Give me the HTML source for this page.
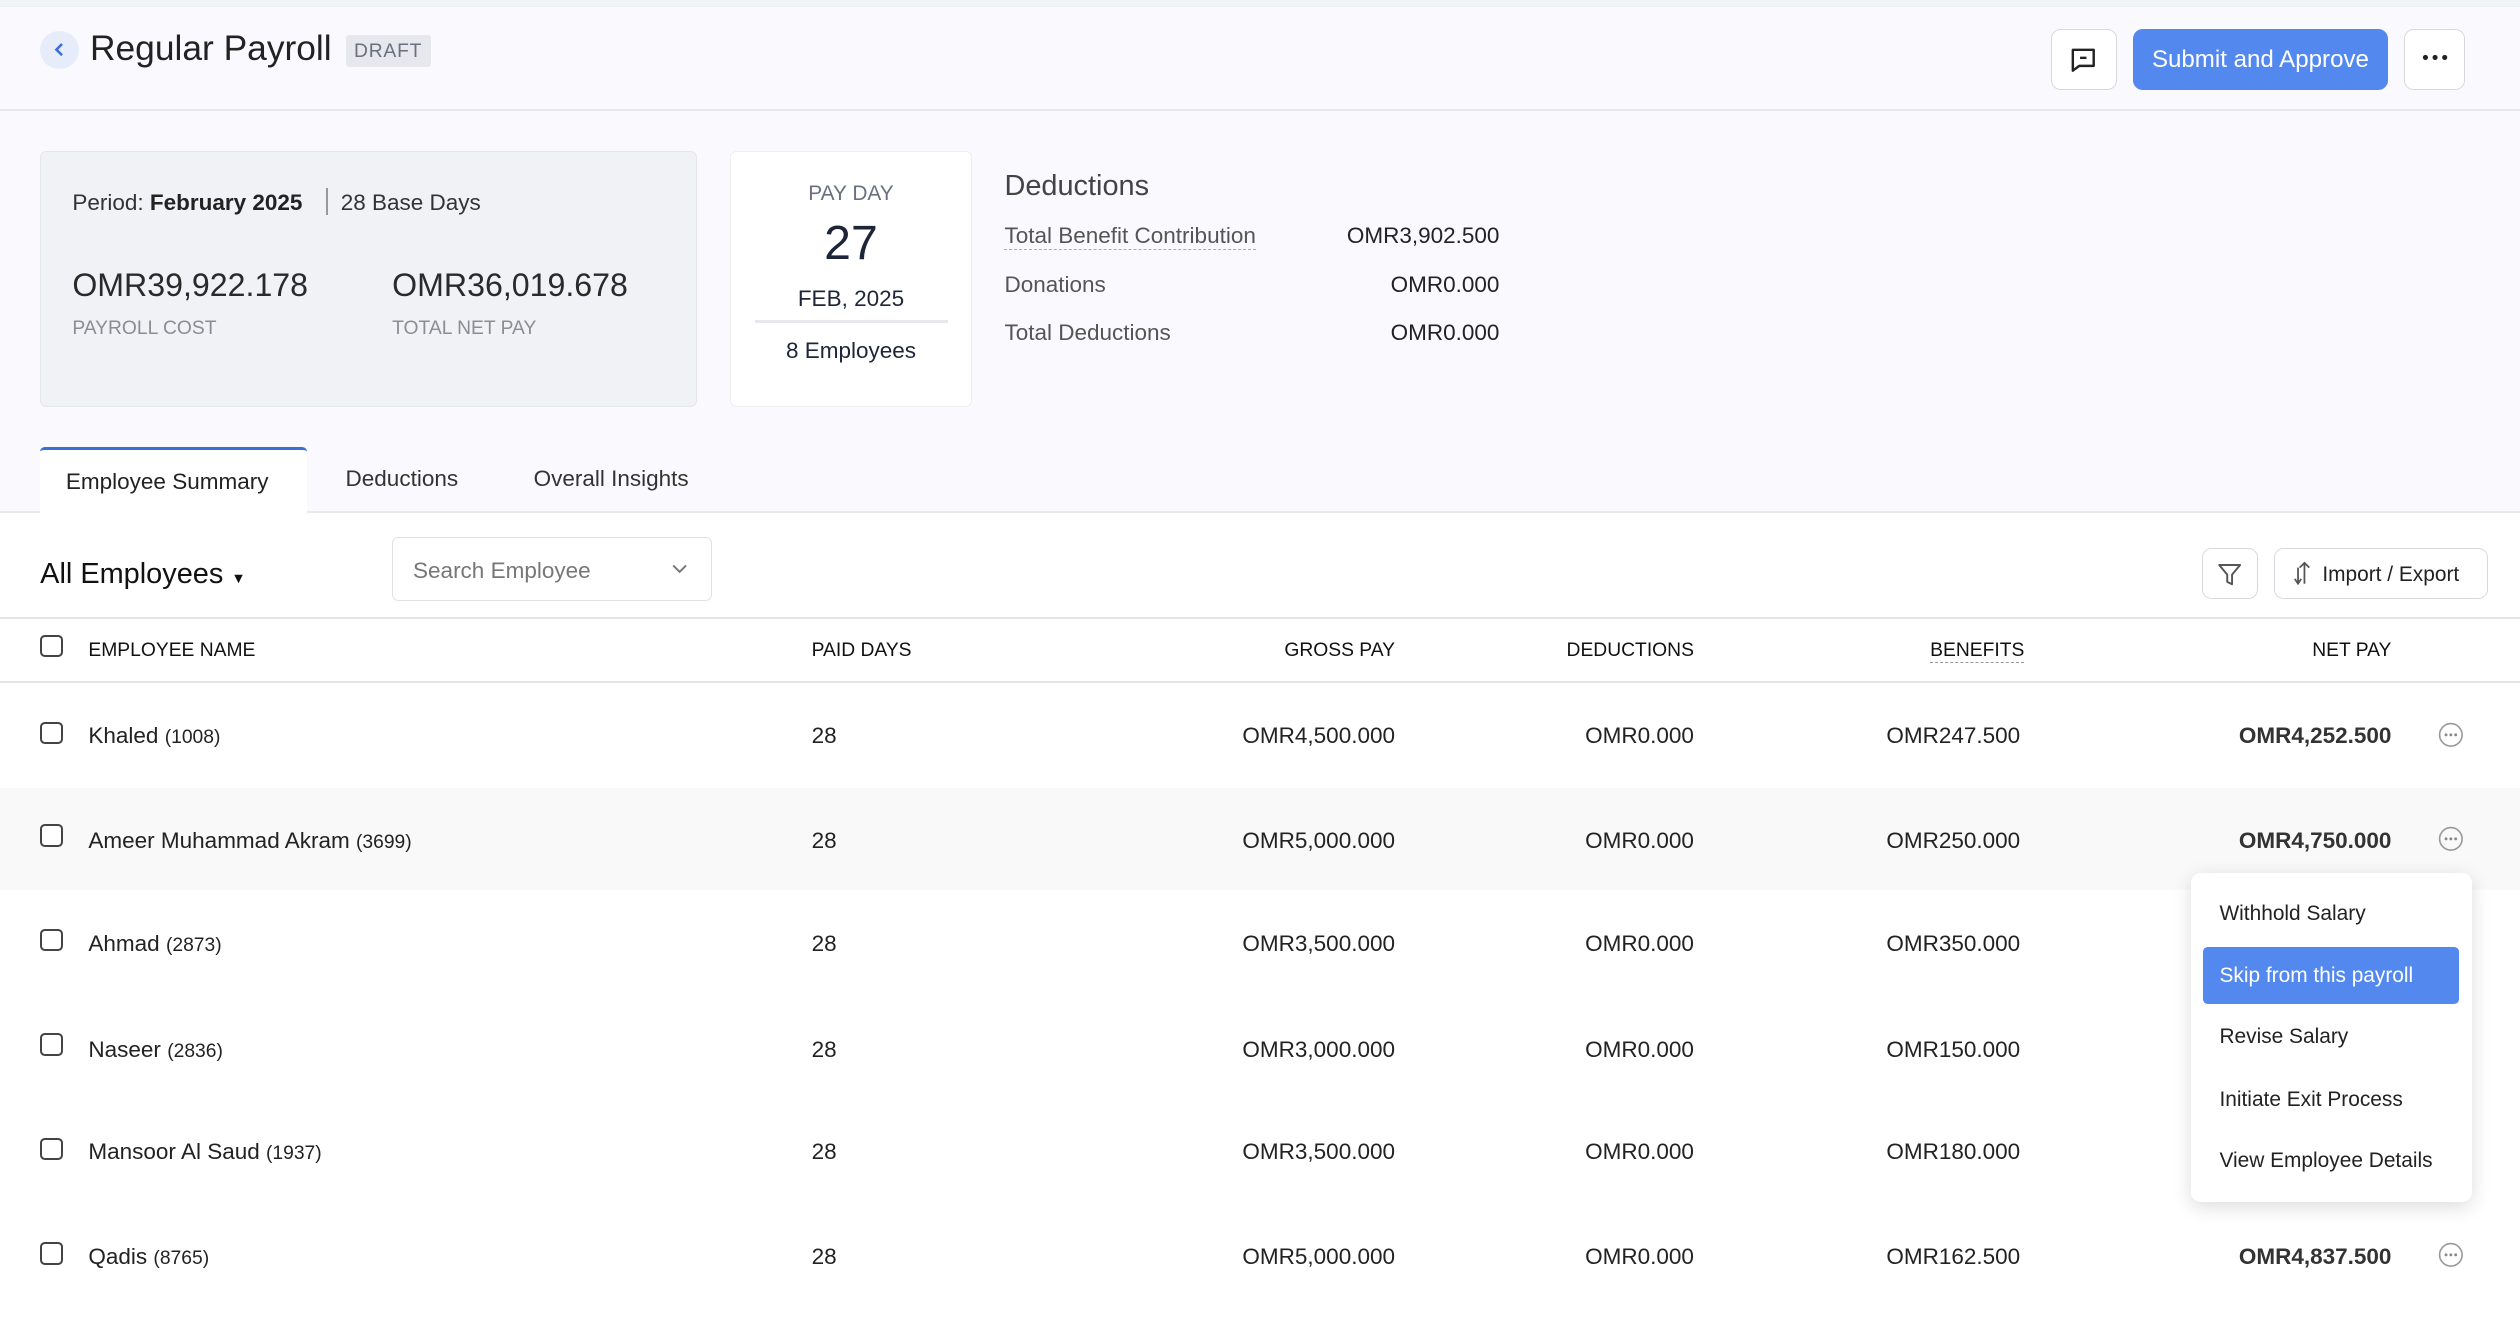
<!DOCTYPE html>
<html><head><meta charset="utf-8"><style>
*{box-sizing:border-box;margin:0;padding:0}
html,body{width:2520px;height:1326px;overflow:hidden;background:#fff}
#w{width:1568px;height:825px;zoom:1.607143;position:relative;font-family:"Liberation Sans",sans-serif;color:#222;background:#fff}
.a{position:absolute;white-space:nowrap}
.r{text-align:right}
.btn{position:absolute;border:1px solid #d6d8de;border-radius:6px;background:#fff}
.cb{position:absolute;left:25px;width:14px;height:14px;border:1.3px solid #444;border-radius:3px;background:#fff}
.row{font-size:14px;margin-top:1px}
</style></head><body><div id="w">
<div class="a" style="left:0;top:0;width:1568px;height:4px;background:#f2f3f7"></div>
<div class="a" style="left:0;top:4px;width:1568px;height:315px;background:#fafafe;border-top:1px solid #eceef2"></div>
<div class="a" style="left:0;top:68px;width:1568px;height:1px;background:#e6e8ec"></div>
<div class="a" style="left:25px;top:19px;width:24px;height:24px;border-radius:50%;background:#e6ecfa"></div>
<svg class="a" style="left:31px;top:25px" width="12" height="12" viewBox="0 0 12 12"><path d="M7.5 2.5 4 6l3.5 3.5" stroke="#3b6fd8" stroke-width="1.6" fill="none"/></svg>
<div class="a" style="left:56px;top:18px;font-size:22px;color:#222">Regular Payroll</div>
<div class="a" style="left:215px;top:22px;width:53px;height:20px;background:#e6e8ee;border-radius:2px;font-size:12px;color:#6b7080;text-align:center;line-height:21px;letter-spacing:.5px">DRAFT</div>
<div class="btn" style="left:1276px;top:18px;width:41px;height:38px"></div>
<svg class="a" style="left:1287px;top:28px" width="19" height="19" viewBox="0 0 19 19"><path d="M3 3h13v10H7l-4 3z" stroke="#222" stroke-width="1.5" fill="none" stroke-linejoin="round"/><path d="M7.5 8h4" stroke="#222" stroke-width="1.5"/></svg>
<div class="a" style="left:1327px;top:18px;width:159px;height:38px;background:#5389ef;border-radius:6px;color:#fff;font-size:15px;text-align:center;line-height:38px">Submit and Approve</div>
<div class="btn" style="left:1496px;top:18px;width:38px;height:38px"></div>
<svg class="a" style="left:1505px;top:32px" width="20" height="8" viewBox="0 0 20 8"><circle cx="4" cy="4" r="1.6" fill="#222"/><circle cx="10" cy="4" r="1.6" fill="#222"/><circle cx="16" cy="4" r="1.6" fill="#222"/></svg>

<div class="a" style="left:25px;top:94px;width:409px;height:159px;background:#f1f2f6;border:1px solid #e4e6eb;border-radius:4px"></div>
<div class="a" style="left:45px;top:118px;font-size:14px;color:#333">Period: <span style="color:#222;font-weight:bold">February 2025</span></div>
<div class="a" style="left:203px;top:117px;width:1px;height:17px;background:#999"></div>
<div class="a" style="left:212px;top:118px;font-size:14px;color:#333">28 Base Days</div>
<div class="a" style="left:45px;top:166px;font-size:20px;color:#2a2a2a">OMR39,922.178</div>
<div class="a" style="left:244px;top:166px;font-size:20px;color:#2a2a2a">OMR36,019.678</div>
<div class="a" style="left:45px;top:198px;font-size:12px;color:#8a8d96">PAYROLL COST</div>
<div class="a" style="left:244px;top:198px;font-size:12px;color:#8a8d96">TOTAL NET PAY</div>

<div class="a" style="left:454px;top:94px;width:151px;height:159px;background:#fff;border:1px solid #eceef2;border-radius:4px"></div>
<div class="a" style="left:454px;top:113px;width:151px;text-align:center;font-size:13px;color:#6b7080">PAY DAY</div>
<div class="a" style="left:454px;top:134px;width:151px;text-align:center;font-size:30px;color:#1f2538">27</div>
<div class="a" style="left:454px;top:178px;width:151px;text-align:center;font-size:14px;color:#1f2538">FEB, 2025</div>
<div class="a" style="left:470px;top:199px;width:120px;height:2px;background:#e6e8ec"></div>
<div class="a" style="left:454px;top:210px;width:151px;text-align:center;font-size:14px;color:#1f2538">8 Employees</div>

<div class="a" style="left:625px;top:106px;font-size:18px;color:#444">Deductions</div>
<div class="a" style="left:625px;top:139px;font-size:14px;color:#555;border-bottom:1px dashed #aaa">Total Benefit Contribution</div>
<div class="a" style="left:625px;top:169px;font-size:14px;color:#555">Donations</div>
<div class="a" style="left:625px;top:199px;font-size:14px;color:#555">Total Deductions</div>
<div class="a r" style="left:780px;width:153px;top:139px;font-size:14px;color:#222">OMR3,902.500</div>
<div class="a r" style="left:780px;width:153px;top:169px;font-size:14px;color:#222">OMR0.000</div>
<div class="a r" style="left:780px;width:153px;top:199px;font-size:14px;color:#222">OMR0.000</div>

<div class="a" style="left:0;top:318px;width:1568px;height:1px;background:#e6e8ec"></div>
<div class="a" style="left:25px;top:278px;width:166px;height:42px;background:#fff;border-top:2px solid #3b6fd8;border-radius:3px 3px 0 0"></div>
<div class="a" style="left:41px;top:292px;font-size:14px;color:#222">Employee Summary</div>
<div class="a" style="left:215px;top:290px;font-size:14px;color:#333">Deductions</div>
<div class="a" style="left:332px;top:290px;font-size:14px;color:#333">Overall Insights</div>

<div class="a" style="left:25px;top:347px;font-size:18px;color:#111">All Employees <span style="font-size:9px">▼</span></div>
<div class="a" style="left:244px;top:334px;width:199px;height:40px;border:1px solid #dfe1e6;border-radius:4px"></div>
<div class="a" style="left:257px;top:347px;font-size:14px;color:#777">Search Employee</div>
<svg class="a" style="left:417px;top:348px" width="12" height="12" viewBox="0 0 12 12"><path d="M2 4l4 4 4-4" stroke="#777" stroke-width="1.2" fill="none"/></svg>
<div class="btn" style="left:1370px;top:341px;width:35px;height:32px"></div>
<svg class="a" style="left:1379px;top:349px" width="17" height="17" viewBox="0 0 17 17"><path d="M2 2.5h13l-5 6v6l-3-1.5v-4.5z" stroke="#555" stroke-width="1.2" fill="none" stroke-linejoin="round"/></svg>
<div class="btn" style="left:1415px;top:341px;width:133px;height:32px"></div>
<svg class="a" style="left:1425px;top:347px" width="16" height="18" viewBox="0 0 16 18"><path d="M9 16V3M6 6l3-3 3 3M5 6v10M3 13l2 3 2-3" stroke="#555" stroke-width="1.1" fill="none"/></svg>
<div class="a" style="left:1445px;top:350px;font-size:13px;color:#222">Import / Export</div>

<div class="a" style="left:0;top:384px;width:1568px;height:1px;background:#e2e4e8"></div>
<div class="a" style="left:0;top:424px;width:1568px;height:1px;background:#e2e4e8"></div>
<div class="cb" style="top:395px"></div>
<div class="a" style="left:55px;top:398px;font-size:12px;color:#111">EMPLOYEE NAME</div>
<div class="a" style="left:505px;top:398px;font-size:12px;color:#111">PAID DAYS</div>
<div class="a r" style="left:700px;width:168px;top:398px;font-size:12px;color:#111">GROSS PAY</div>
<div class="a r" style="left:900px;width:154px;top:398px;font-size:12px;color:#111">DEDUCTIONS</div>
<div class="a" style="left:1201px;top:398px;font-size:12px;color:#111;border-bottom:1px dashed #999">BENEFITS</div>
<div class="a r" style="left:1300px;width:188px;top:398px;font-size:12px;color:#111">NET PAY</div>

<div class="a" style="left:0;top:490px;width:1568px;height:64px;background:#f9f9fa"></div>

<div class="cb" style="top:449px"></div><div class="a row" style="left:55px;top:449px">Khaled <span style="font-size:12px">(1008)</span></div><div class="a row" style="left:505px;top:449px">28</div><div class="a row r" style="left:700px;width:168px;top:449px">OMR4,500.000</div><div class="a row r" style="left:900px;width:154px;top:449px">OMR0.000</div><div class="a row r" style="left:1100px;width:157px;top:449px">OMR247.500</div><div class="a row r" style="left:1300px;width:188px;top:449px;font-weight:bold;color:#333">OMR4,252.500</div>
<div class="cb" style="top:513px"></div><div class="a row" style="left:55px;top:514px">Ameer Muhammad Akram <span style="font-size:12px">(3699)</span></div><div class="a row" style="left:505px;top:514px">28</div><div class="a row r" style="left:700px;width:168px;top:514px">OMR5,000.000</div><div class="a row r" style="left:900px;width:154px;top:514px">OMR0.000</div><div class="a row r" style="left:1100px;width:157px;top:514px">OMR250.000</div><div class="a row r" style="left:1300px;width:188px;top:514px;font-weight:bold;color:#333">OMR4,750.000</div>
<div class="cb" style="top:578px"></div><div class="a row" style="left:55px;top:578px">Ahmad <span style="font-size:12px">(2873)</span></div><div class="a row" style="left:505px;top:578px">28</div><div class="a row r" style="left:700px;width:168px;top:578px">OMR3,500.000</div><div class="a row r" style="left:900px;width:154px;top:578px">OMR0.000</div><div class="a row r" style="left:1100px;width:157px;top:578px">OMR350.000</div>
<div class="cb" style="top:643px"></div><div class="a row" style="left:55px;top:644px">Naseer <span style="font-size:12px">(2836)</span></div><div class="a row" style="left:505px;top:644px">28</div><div class="a row r" style="left:700px;width:168px;top:644px">OMR3,000.000</div><div class="a row r" style="left:900px;width:154px;top:644px">OMR0.000</div><div class="a row r" style="left:1100px;width:157px;top:644px">OMR150.000</div>
<div class="cb" style="top:708px"></div><div class="a row" style="left:55px;top:708px">Mansoor Al Saud <span style="font-size:12px">(1937)</span></div><div class="a row" style="left:505px;top:708px">28</div><div class="a row r" style="left:700px;width:168px;top:708px">OMR3,500.000</div><div class="a row r" style="left:900px;width:154px;top:708px">OMR0.000</div><div class="a row r" style="left:1100px;width:157px;top:708px">OMR180.000</div>
<div class="cb" style="top:773px"></div><div class="a row" style="left:55px;top:773px">Qadis <span style="font-size:12px">(8765)</span></div><div class="a row" style="left:505px;top:773px">28</div><div class="a row r" style="left:700px;width:168px;top:773px">OMR5,000.000</div><div class="a row r" style="left:900px;width:154px;top:773px">OMR0.000</div><div class="a row r" style="left:1100px;width:157px;top:773px">OMR162.500</div><div class="a row r" style="left:1300px;width:188px;top:773px;font-weight:bold;color:#333">OMR4,837.500</div>

<svg class="a" style="left:1517px;top:449px" width="16" height="16" viewBox="0 0 16 16"><circle cx="8" cy="8" r="7" stroke="#999" fill="none"/><circle cx="5" cy="8" r=".9" fill="#888"/><circle cx="8" cy="8" r=".9" fill="#888"/><circle cx="11" cy="8" r=".9" fill="#888"/></svg>
<svg class="a" style="left:1517px;top:514px" width="16" height="16" viewBox="0 0 16 16"><circle cx="8" cy="8" r="7" stroke="#999" fill="none"/><circle cx="5" cy="8" r=".9" fill="#888"/><circle cx="8" cy="8" r=".9" fill="#888"/><circle cx="11" cy="8" r=".9" fill="#888"/></svg>
<svg class="a" style="left:1517px;top:773px" width="16" height="16" viewBox="0 0 16 16"><circle cx="8" cy="8" r="7" stroke="#999" fill="none"/><circle cx="5" cy="8" r=".9" fill="#888"/><circle cx="8" cy="8" r=".9" fill="#888"/><circle cx="11" cy="8" r=".9" fill="#888"/></svg>

<div class="a" style="left:1363px;top:543px;width:175px;height:205px;background:#fff;border-radius:6px;box-shadow:0 3px 12px rgba(0,0,0,.14)"></div>
<div class="a" style="left:1381px;top:561px;font-size:13px;color:#222">Withhold Salary</div>
<div class="a" style="left:1371px;top:589px;width:159px;height:36px;background:#5389ef;border-radius:3px"></div>
<div class="a" style="left:1381px;top:600px;font-size:13px;color:#fff">Skip from this payroll</div>
<div class="a" style="left:1381px;top:638px;font-size:13px;color:#222">Revise Salary</div>
<div class="a" style="left:1381px;top:677px;font-size:13px;color:#222">Initiate Exit Process</div>
<div class="a" style="left:1381px;top:715px;font-size:13px;color:#222">View Employee Details</div>
</div></body></html>
